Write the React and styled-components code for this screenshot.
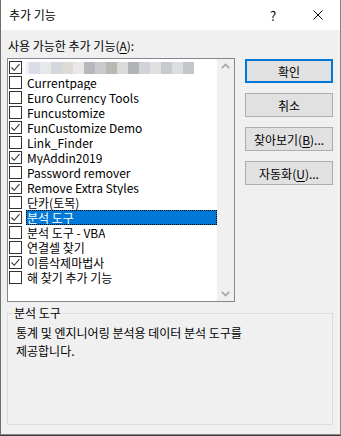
import React from "react";
import styled, { createGlobalStyle } from "styled-components";

const Global = createGlobalStyle`
  html, body { margin: 0; padding: 0; background: #3a3a3a; }
  body { font-family: "Noto Sans CJK KR", "Noto Sans", sans-serif; }
  #root { width: 341px; height: 436px; }
`;

const Dialog = styled.div`
  width: 341px;
  height: 435px;
  box-sizing: border-box;
  border-left: 1px solid #6e6e6e;
  border-right: 1px solid #8a8a8a;
  border-bottom: 1px solid #8a8a8a;
  display: flex;
  flex-direction: column;
  background: #f0f0f0;
  color: #000;
  font-size: 12px;
`;

const TitleBar = styled.div`
  height: 30px;
  flex: none;
  background: #fff;
  display: flex;
  align-items: center;
  padding-left: 8px;
`;

const Title = styled.div`
  flex: 1;
  font-size: 12px;
  line-height: 16px;
`;

const TitleBtn = styled.div`
  width: ${(p) => p.$w}px;
  height: 30px;
  display: flex;
  align-items: center;
  justify-content: center;
  font-size: 13px;
`;

const Body = styled.div`
  flex: 1;
  padding: 8px 7px 9px 6px;
  display: flex;
  flex-direction: column;
`;

const TopRow = styled.div`
  display: flex;
  align-items: flex-start;
`;

const LeftCol = styled.div`
  display: flex;
  flex-direction: column;
  width: 228px;
`;

const Label = styled.div`
  line-height: 16px;
  height: 20px;
  padding-left: 1px;
  white-space: nowrap;
`;

const U = styled.span`
  text-decoration: underline;
  text-underline-offset: 2px;
`;

const ListBox = styled.div`
  width: 228px;
  height: 244px;
  box-sizing: border-box;
  border: 1px solid #828790;
  background: #fff;
  display: flex;
`;

const Items = styled.div`
  flex: 1;
  padding-top: 1px;
  display: flex;
  flex-direction: column;
`;

const Item = styled.div`
  height: 15px;
  display: flex;
  align-items: center;
  padding-left: 1px;
  white-space: nowrap;
`;

const Box = styled.div`
  width: 13px;
  height: 13px;
  box-sizing: border-box;
  border: 1px solid #333;
  background: #fff;
  flex: none;
  display: flex;
  align-items: center;
  justify-content: center;
`;

const ItemText = styled.div`
  margin-left: 4px;
  height: 15px;
  line-height: 15px;
  padding-left: 1px;
  overflow: hidden;
  flex: ${(p) => (p.$sel ? 1 : "none")};
  background: ${(p) => (p.$sel ? "#0078d7" : "transparent")};
  color: ${(p) => (p.$sel ? "#fff" : "#000")};
  outline: ${(p) => (p.$sel ? "1px dotted #000" : "none")};
  outline-offset: -1px;
`;

const Mosaic = styled.div`
  display: flex;
  height: 12px;
  margin-left: 4px;
  align-items: stretch;
`;

const Tile = styled.div`
  width: ${(p) => p.$w}px;
  background: ${(p) => p.$c};
`;

const ScrollBar = styled.div`
  width: 17px;
  flex: none;
  background: #f0f0f0;
  display: flex;
  flex-direction: column;
  justify-content: space-between;
  align-items: center;
  padding: 4px 0;
`;

const Buttons = styled.div`
  margin-left: 10px;
  padding-top: 21px;
  display: flex;
  flex-direction: column;
  gap: 10px;
`;

const Button = styled.div`
  width: 88px;
  height: 24px;
  box-sizing: border-box;
  background: #e1e1e1;
  border: ${(p) => (p.$def ? "2px solid #0078d7" : "1px solid #adadad")};
  display: flex;
  align-items: center;
  justify-content: center;
  white-space: nowrap;
  font-size: 12px;
`;

const Group = styled.div`
  margin-top: 11px;
  padding: 0 8px;
  border: 1px solid #dcdcdc;
  flex: 1;
  display: flex;
  flex-direction: column;
  align-items: flex-start;
`;

const Legend = styled.div`
  margin: -8px 0 0 -3px;
  padding: 0 1px;
  background: #f0f0f0;
  font-size: 12px;
  line-height: 14px;
  height: 14px;
`;

const Desc = styled.div`
  margin-top: 4px;
  line-height: 18px;
  font-size: 12px;
`;

const Check = () => (
  <svg width="11" height="11" viewBox="0 0 11 11">
    <path d="M1.5 5.5 L4.2 8.3 L9.5 2.2" fill="none" stroke="#333" strokeWidth="1.1" />
  </svg>
);

const Chevron = ({ up }) => (
  <svg width="9" height="6" viewBox="0 0 9 6">
    <path
      d={up ? "M0.8 5.2 L4.5 1.5 L8.2 5.2" : "M0.8 0.8 L4.5 4.5 L8.2 0.8"}
      fill="none"
      stroke="#a3a3a3"
      strokeWidth="1.6"
    />
  </svg>
);

const mosaic = [
  ["#eef0f4", 3], ["#d8dde6", 11], ["#e6e8ec", 11], ["#d3d7de", 11], ["#dedbd5", 11],
  ["#e8e8e8", 11], ["#b6b8be", 11], ["#c9cacd", 11], ["#b9b8b3", 11], ["#dadada", 11],
  ["#b2b3b7", 11], ["#d0d3da", 11], ["#e0e0e0", 11], ["#c9cacd", 11], ["#dcdde1", 11],
  ["#c4c6cc", 11],
];

const items = [
  { t: null, c: true },
  { t: "Currentpage" },
  { t: "Euro Currency Tools" },
  { t: "Funcustomize" },
  { t: "FunCustomize Demo", c: true },
  { t: "Link_Finder" },
  { t: "MyAddin2019", c: true },
  { t: "Password remover" },
  { t: "Remove Extra Styles", c: true },
  { t: "단카(토목)" },
  { t: "분석 도구", c: true, s: true },
  { t: "분석 도구 - VBA" },
  { t: "연결셀 찾기" },
  { t: "이름삭제마법사", c: true },
  { t: "해 찾기 추가 기능" },
];

export default function App() {
  return (
    <>
      <Global />
      <Dialog>
        <TitleBar>
          <Title>추가 기능</Title>
          <TitleBtn $w={46}>?</TitleBtn>
          <TitleBtn $w={44}>
            <svg width="10" height="10" viewBox="0 0 10 10">
              <path d="M0.5 0.5 L9.5 9.5 M9.5 0.5 L0.5 9.5" stroke="#000" strokeWidth="1" />
            </svg>
          </TitleBtn>
        </TitleBar>
        <Body>
          <TopRow>
            <LeftCol>
              <Label>
                사용 가능한 추가 기능(<U>A</U>):
              </Label>
              <ListBox>
                <Items>
                  {items.map((it, i) => (
                    <Item key={i}>
                      <Box>{it.c && <Check />}</Box>
                      {it.t === null ? (
                        <Mosaic>
                          {mosaic.map(([c, w], j) => (
                            <Tile key={j} $c={c} $w={w} />
                          ))}
                        </Mosaic>
                      ) : (
                        <ItemText $sel={it.s}>{it.t}</ItemText>
                      )}
                    </Item>
                  ))}
                </Items>
                <ScrollBar>
                  <Chevron up />
                  <Chevron />
                </ScrollBar>
              </ListBox>
            </LeftCol>
            <Buttons>
              <Button $def>확인</Button>
              <Button>취소</Button>
              <Button>
                찾아보기(<U>B</U>)...
              </Button>
              <Button>
                자동화(<U>U</U>)...
              </Button>
            </Buttons>
          </TopRow>
          <Group>
            <Legend>분석 도구</Legend>
            <Desc>
              통계 및 엔지니어링 분석용 데이터 분석 도구를
              <br />
              제공합니다.
            </Desc>
          </Group>
        </Body>
      </Dialog>
    </>
  );
}
